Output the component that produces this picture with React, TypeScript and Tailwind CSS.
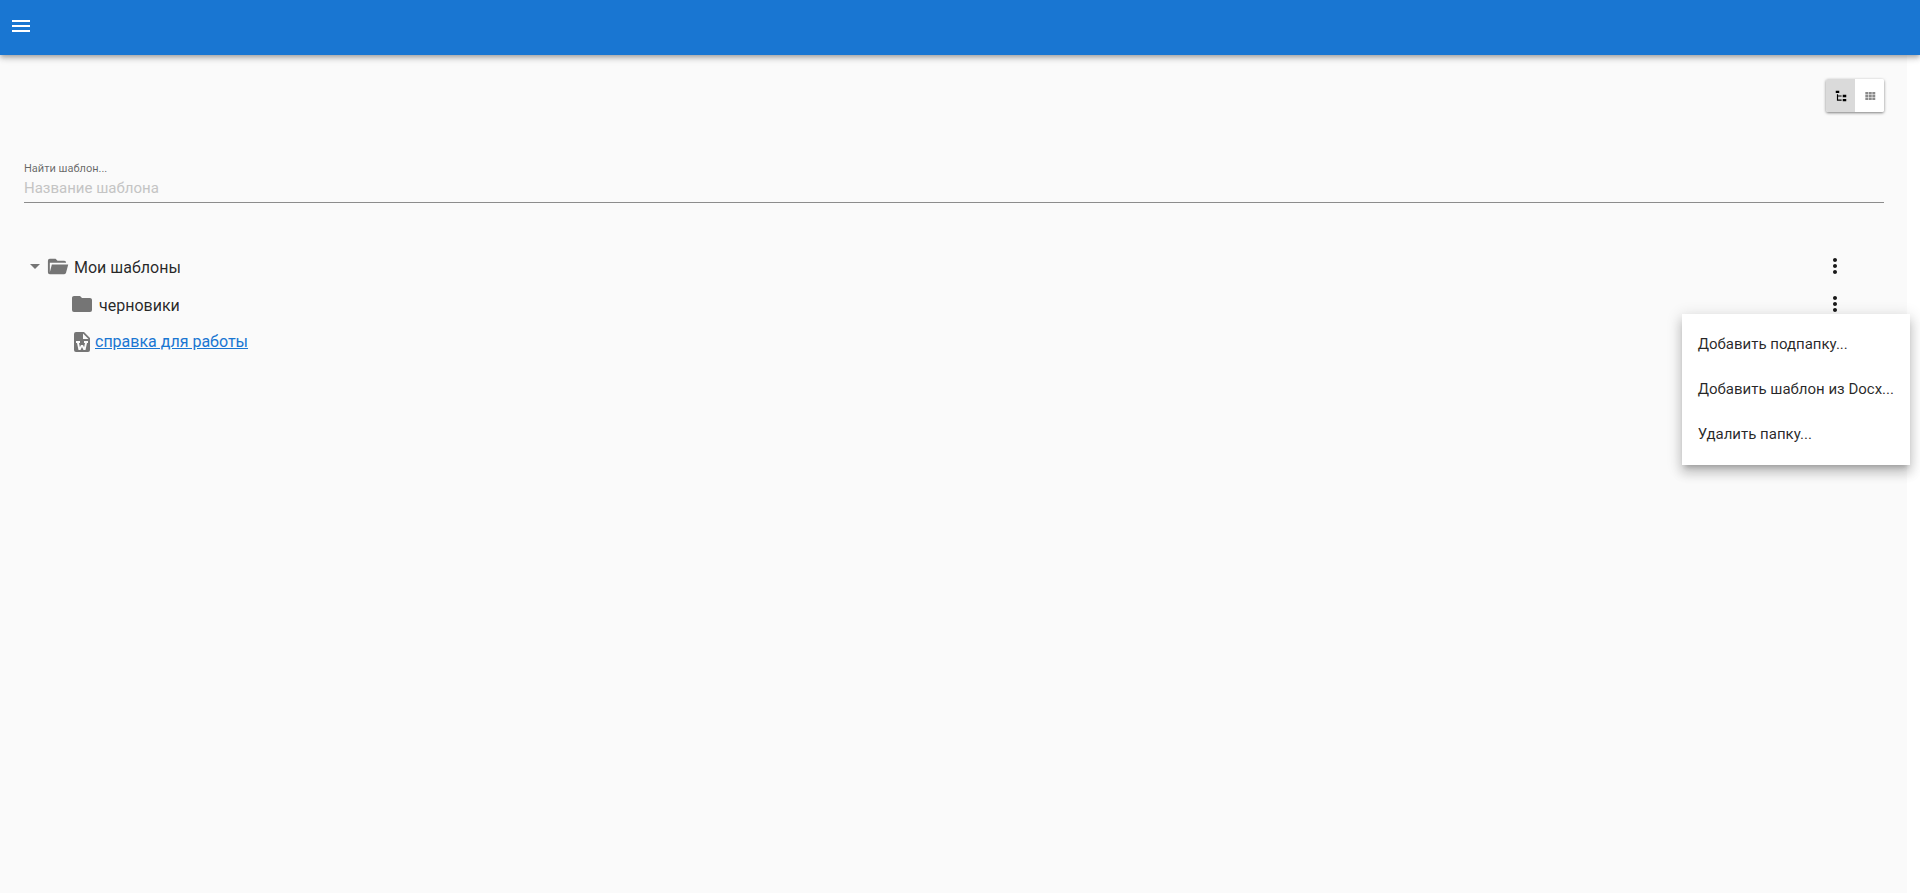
import type { ReactNode } from 'react';

const icons = {
  menu: 'M3 18h18v-2H3v2zm0-5h18v-2H3v2zm0-7v2h18V6H3z',
  tree: 'M3,3H9V7H3V3M15,10H21V14H15V10M15,17H21V21H15V17M13,13H7V18H13V20H7L5,20V9H7V11H13V13Z',
  grid: 'M4 5h5v4H4zM10 5h5v4h-5zM16 5h5v4h-5zM4 10h5v4H4zM10 10h5v4h-5zM16 10h5v4h-5zM4 15h5v4H4zM10 15h5v4h-5zM16 15h5v4h-5z',
  arrowDown: 'M7 10l5 5 5-5z',
  folder: 'M10,4H4C2.89,4 2,4.89 2,6V18A2,2 0 0,0 4,20H20A2,2 0 0,0 22,18V8C22,6.89 21.1,6 20,6H12L10,4Z',
  folderOpen:
    'M6.1,10L4,18V8H21A2,2 0 0,0 19,6H12L10,4H4A2,2 0 0,0 2,6V18A2,2 0 0,0 4,20H19C19.9,20 20.7,19.4 20.9,18.5L23.2,10H6.1Z',
  fileWord:
    'M6,2H14L20,8V20A2,2 0 0,1 18,22H6A2,2 0 0,1 4,20V4A2,2 0 0,1 6,2M13,3.5V9H18.5L13,3.5M7,13L8.5,20H10.5L12,17L13.5,20H15.5L17,13H18V11H14V13H15L14.1,17.2L13,15V15H11V15L9.9,17.2L9,13H10V11H6V13H7Z',
  dots: 'M12 8c1.1 0 2-.9 2-2s-.9-2-2-2-2 .9-2 2 .9 2 2 2zm0 2c-1.1 0-2 .9-2 2s.9 2 2 2 2-.9 2-2-.9-2-2-2zm0 6c-1.1 0-2 .9-2 2s.9 2 2 2 2-.9 2-2-.9-2-2-2z',
};

const Icon = ({ name, className }: { name: keyof typeof icons; className: string }) => (
  <svg viewBox="0 0 24 24" fill="currentColor" aria-hidden="true" className={className}>
    <path d={icons[name]} />
  </svg>
);

const Row = ({ children, menu }: { children: ReactNode; menu?: ReactNode }) => (
  <div className="flex h-[38px] items-center justify-between pr-[37px]">
    <div className="flex items-center">{children}</div>
    {menu}
  </div>
);

const MoreButton = ({ label, expanded }: { label: string; expanded?: boolean }) => (
  <button
    type="button"
    aria-label={label}
    aria-haspopup="menu"
    aria-expanded={expanded}
    className="flex text-black/90"
  >
    <Icon name="dots" className="size-6" />
  </button>
);

const menuItems = ['Добавить подпапку...', 'Добавить шаблон из Docx...', 'Удалить папку...'];

const FolderMenu = () => (
  <div
    role="menu"
    className="absolute top-[29px] -right-[26px] z-10 bg-white py-2 shadow-[0_5px_5px_-3px_rgba(0,0,0,0.2),0_8px_10px_1px_rgba(0,0,0,0.14),0_3px_14px_2px_rgba(0,0,0,0.12)]"
  >
    {menuItems.map((item) => (
      <button
        key={item}
        type="button"
        role="menuitem"
        className="block h-[45px] w-full px-4 text-left text-[15px] whitespace-nowrap"
      >
        {item}
      </button>
    ))}
  </div>
);

const App = () => (
  <div className="flex min-h-screen flex-col bg-white font-[Roboto,'Liberation_Sans',sans-serif] text-black/85">
    <header className="relative z-10 flex h-[55px] items-center bg-[#1976d2] px-[9px] shadow-[0_2px_4px_-1px_rgba(0,0,0,0.2),0_4px_5px_0_rgba(0,0,0,0.14),0_1px_10px_0_rgba(0,0,0,0.12)]">
      <button type="button" aria-label="Меню" className="flex pb-1 text-white">
        <Icon name="menu" className="size-6" />
      </button>
    </header>

    <main className="mr-[13px] grow bg-[#fafafa] pt-6 pr-[23px] pl-6">
      <div className="flex justify-end">
        <div className="flex h-[33px] overflow-hidden rounded-xs shadow-[0_1px_3px_rgba(0,0,0,0.5)]">
          <button
            type="button"
            aria-label="Дерево"
            aria-pressed="true"
            className="flex w-[29px] items-center justify-center bg-[#dadada] text-black"
          >
            <Icon name="tree" className="size-[14px]" />
          </button>
          <button
            type="button"
            aria-label="Плитка"
            aria-pressed="false"
            className="flex w-[29px] items-center justify-center bg-white text-[#8a8a8a]"
          >
            <Icon name="grid" className="size-[14px]" />
          </button>
        </div>
      </div>

      <div className="mt-12 flex flex-col border-b border-[#8c8c8c]">
        <label htmlFor="search" className="text-[11px] leading-[18px] text-black/60">
          Найти шаблон...
        </label>
        <input
          id="search"
          type="text"
          placeholder="Название шаблона"
          className="h-6 bg-transparent pb-1 text-[15px] outline-none placeholder:text-[#c4c4c4]"
        />
      </div>

      <div className="mt-11 text-base">
        <Row menu={<MoreButton label="Меню папки Мои шаблоны" />}>
          <button type="button" aria-label="Свернуть" className="-ml-px flex text-[#757575]">
            <Icon name="arrowDown" className="size-6" />
          </button>
          <Icon name="folderOpen" className="mr-[5px] -ml-px size-[23px] text-[#757575]" />
          <span className="pt-[3px]">Мои шаблоны</span>
        </Row>
        <div className="relative">
          <Row menu={<MoreButton label="Меню папки черновики" expanded />}>
            <Icon name="folder" className="mr-[5px] ml-[46px] size-6 text-[#757575]" />
            <span className="pt-[3px]">черновики</span>
          </Row>
          <FolderMenu />
        </div>
        <Row>
          <Icon name="fileWord" className="mr-px ml-[46px] size-6 text-[#757575]" />
          <a href="#" className="text-[#1976d2] underline">
            справка для работы
          </a>
        </Row>
      </div>
    </main>
  </div>
);

export default App;
